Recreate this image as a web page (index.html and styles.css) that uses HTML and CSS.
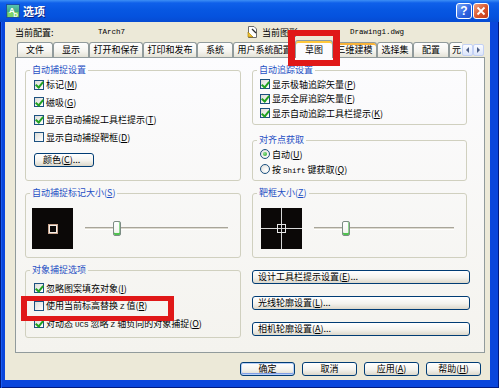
FILE: index.html
```html
<!DOCTYPE html>
<html lang="zh-CN">
<head>
<meta charset="utf-8">
<title>选项</title>
<link rel="stylesheet" href="styles.css">
</head>
<body>
<div class="window">
  <div class="titlebar">
    <svg class="app-icon" width="14" height="14" viewBox="0 0 14 14">
      <defs>
        <linearGradient id="ai" x1="0" y1="0" x2="0" y2="1">
          <stop offset="0" stop-color="#58c6b4"/>
          <stop offset="1" stop-color="#2a8f5a"/>
        </linearGradient>
      </defs>
      <rect x="0.5" y="0.5" width="13" height="13" fill="url(#ai)" stroke="#1d4fa0"/>
      <rect x="1.5" y="8" width="11" height="5" fill="#7fd36a"/>
      <text x="3" y="9" font-family="Liberation Sans, sans-serif" font-size="8" font-weight="bold" fill="#fff">A</text>
      <text x="7.5" y="13" font-family="Liberation Sans, sans-serif" font-size="6" font-weight="bold" fill="#fff">D</text>
    </svg>
    <span class="title">选项</span>
    <span class="tb-btn help">?</span>
    <span class="tb-btn close">
      <svg width="10" height="10" viewBox="0 0 10 10"><path d="M1.5 1.5 L8.5 8.5 M8.5 1.5 L1.5 8.5" stroke="#fff" stroke-width="1.8"/></svg>
    </span>
  </div>
  <div class="frame">
    <div class="client">
      <div class="profile">
        <span class="p-label p-label1">当前配置:</span>
        <span class="mono p-value1">TArch7</span>
        <svg class="doc-icon" width="11" height="12" viewBox="0 0 11 12">
          <path d="M1.5 0.5 H7 L9.5 3 V11.5 H1.5 Z" fill="#fff" stroke="#6b6b6b"/>
          <path d="M1 6 L6 11 L1 11 Z" fill="#f2c230" stroke="#a07800" stroke-width="0.6"/>
          <path d="M5 3 L9 7" stroke="#2b2b2b" stroke-width="1.2"/>
        </svg>
        <span class="p-label p-label2">当前图形:</span>
        <span class="mono">Drawing1.dwg</span>
      </div>
      <div class="tabs">
        <span class="tab">文件</span>
        <span class="tab">显示</span>
        <span class="tab">打开和保存</span>
        <span class="tab">打印和发布</span>
        <span class="tab">系统</span>
        <span class="tab">用户系统配置</span>
        <span class="tab sel">草图</span>
        <span class="tab hot">三维建模</span>
        <span class="tab">选择集</span>
        <span class="tab">配置</span>
        <span class="tab cut">元</span>
        <span class="spin"><span class="sp sp-l"></span><span class="sp sp-r"></span></span>
      </div>
      <div class="panel">
        <div class="col col-left">
          <fieldset class="group g-snap">
            <legend>自动捕捉设置</legend>
            <div class="gbody">
              <div class="row"><span class="cb on"></span><span>标记(<u>M</u>)</span></div>
              <div class="row"><span class="cb on"></span><span>磁吸(<u>G</u>)</span></div>
              <div class="row"><span class="cb on"></span><span>显示自动捕捉工具栏提示(<u>T</u>)</span></div>
              <div class="row"><span class="cb"></span><span>显示自动捕捉靶框(<u>D</u>)</span></div>
              <button class="btn btn-color">颜色(<u>C</u>)...</button>
            </div>
          </fieldset>
          <fieldset class="group g-size">
            <legend>自动捕捉标记大小(<u>S</u>)</legend>
            <div class="gbody size-body">
              <div class="preview"><span class="marker"></span></div>
              <div class="slider"><span class="track track-a"></span><span class="thumb"></span><span class="track track-b"></span></div>
            </div>
          </fieldset>
          <fieldset class="group g-osnap">
            <legend>对象捕捉选项</legend>
            <div class="gbody">
              <div class="row"><span class="cb on"></span><span>忽略图案填充对象(<u>I</u>)</span></div>
              <div class="row"><span class="cb"></span><span>使用当前标高替换 <span class="mono">Z</span> 值(<u>R</u>)</span></div>
              <div class="row"><span class="cb on"></span><span>对动态 <span class="mono">UCS</span> 忽略 <span class="mono">Z</span> 轴负向的对象捕捉(<u>O</u>)</span></div>
            </div>
          </fieldset>
        </div>
        <div class="col col-right">
          <fieldset class="group g-track">
            <legend>自动追踪设置</legend>
            <div class="gbody">
              <div class="row"><span class="cb on"></span><span>显示极轴追踪矢量(<u>P</u>)</span></div>
              <div class="row"><span class="cb on"></span><span>显示全屏追踪矢量(<u>F</u>)</span></div>
              <div class="row"><span class="cb on"></span><span>显示自动追踪工具栏提示(<u>K</u>)</span></div>
            </div>
          </fieldset>
          <fieldset class="group g-align">
            <legend>对齐点获取</legend>
            <div class="gbody">
              <div class="row"><span class="rb on"></span><span>自动(<u>U</u>)</span></div>
              <div class="row"><span class="rb"></span><span>按 <span class="mono">Shift</span> 键获取(<u>Q</u>)</span></div>
            </div>
          </fieldset>
          <fieldset class="group g-aperture">
            <legend>靶框大小(<u>Z</u>)</legend>
            <div class="gbody size-body">
              <div class="preview">
                <svg width="41" height="41" viewBox="0 0 41 41">
                  <path d="M0 20.5 H41 M20.5 0 V41" stroke="#d8d8d8" stroke-width="1"/>
                  <rect x="16.5" y="16.5" width="8" height="8" fill="none" stroke="#e8e8e8" stroke-width="1"/>
                </svg>
              </div>
              <div class="slider"><span class="track track-a"></span><span class="thumb"></span><span class="track track-b"></span></div>
            </div>
          </fieldset>
          <button class="btn btn-wide">设计工具栏提示设置(<u>E</u>)...</button>
          <button class="btn btn-wide">光线轮廓设置(<u>L</u>)...</button>
          <button class="btn btn-wide">相机轮廓设置(<u>A</u>)...</button>
        </div>
      </div>
      <div class="footer">
        <button class="btn btn-foot default">确定</button>
        <button class="btn btn-foot">取消</button>
        <button class="btn btn-foot">应用(<u>A</u>)</button>
        <button class="btn btn-foot">帮助(<u>H</u>)</button>
      </div>
    </div>
  </div>
  <div class="mark mark-tab"></div>
  <div class="mark mark-row"></div>
</div>
</body>
</html>
```
FILE: styles.css
```css
* { box-sizing: border-box; }
html, body { margin: 0; padding: 0; }
body {
  width: 499px;
  height: 388px;
  overflow: hidden;
  font-family: "Noto Sans CJK SC", "Noto Sans", sans-serif;
  font-size: 9px;
  color: #000;
  background: #0842d6;
}
.window {
  position: relative;
  width: 499px;
  height: 388px;
  display: flex;
  flex-direction: column;
  background: #0a46dc;
  box-shadow: inset 1px 0 #001a80, inset 2px 0 #1a5cf0, inset -1px 0 #001a80, inset 0 -1px #001a80;
}
.titlebar {
  height: 22px;
  flex: none;
  display: flex;
  align-items: center;
  padding: 0 10px 0 6px;
  background: linear-gradient(#3d8ff5 0, #0f60ea 3px, #0757e2 45%, #0552de 75%, #064bd2 100%);
}
.app-icon { flex: none; }
.title {
  margin-left: 3px;
  color: #fff;
  font-weight: bold;
  font-size: 11px;
  line-height: 14px;
  text-shadow: 1px 1px #0c1f7a;
  flex: 1;
}
.tb-btn {
  width: 16px;
  height: 16px;
  border: 1px solid #fff;
  border-radius: 3px;
  display: flex;
  align-items: center;
  justify-content: center;
  color: #fff;
  font-family: "Liberation Sans", sans-serif;
  font-weight: bold;
  font-size: 12px;
  line-height: 1;
}
.help { background: linear-gradient(135deg, #7aa8f8, #2d62e2 60%, #2452c8); margin-right: 1px; }
.close { background: linear-gradient(135deg, #f0a080, #d8542c 55%, #c03a18); }
.frame {
  flex: 1;
  display: flex;
  padding: 0 9px 8px 5px;
}
.client {
  flex: 1;
  background: #ece9d8;
  display: flex;
  flex-direction: column;
  padding: 0 5px 0 10px;
}
.profile {
  height: 20px;
  display: flex;
  align-items: center;
}
.p-label1 { width: 83px; }
.p-value1 { width: 149px; }
.doc-icon { flex: none; margin-right: 4px; }
.p-label2 { width: 88px; }
.mono {
  font-family: "Liberation Mono", monospace;
  font-size: 7.5px;
}
.tabs {
  height: 15px;
  display: flex;
  align-items: flex-end;
  padding-left: 2px;
}
.tab {
  height: 15px;
  min-width: 36px;
  padding: 0 3.5px;
  border: 1px solid #919b9c;
  border-bottom: none;
  border-radius: 3px 3px 0 0;
  background: linear-gradient(#fefefe, #f5f4ef 60%, #e4e2d6);
  line-height: 14px;
  text-align: center;
  white-space: nowrap;
}
.tab.hot { box-shadow: inset 0 2px #f8b33a; }
.tab.sel {
  position: relative;
  z-index: 1;
  height: 18px;
  margin: 0 -1px -1px;
  min-width: 38px;
  background: #fcfcfe;
  box-shadow: inset 0 2px #ffc83c;
  border-color: #919b9c;
  line-height: 17px;
}
.tab.cut {
  min-width: 0;
  width: 13px;
  padding: 0 0 0 2px;
  border-right: none;
  border-radius: 3px 0 0 0;
  text-align: left;
}
.spin {
  display: flex;
  align-self: flex-start;
  margin-top: 2px;
}
.sp {
  width: 11px;
  height: 12px;
  border: 1px solid #c3d1f5;
  border-radius: 2px;
  background: linear-gradient(#fbfcff, #dce5fa);
  display: flex;
  align-items: center;
  justify-content: center;
}
.sp::after {
  content: "";
  width: 0;
  height: 0;
  border-top: 3px solid transparent;
  border-bottom: 3px solid transparent;
}
.sp-l::after { border-right: 3px solid #4a5d86; }
.sp-r::after { border-left: 3px solid #4a5d86; }
.panel {
  height: 296px;
  border: 1px solid #919b9c;
  background: linear-gradient(#fcfcfe, #f4f3ee);
  display: grid;
  grid-template-columns: 216px 218px;
  column-gap: 11px;
  align-content: start;
  padding: 7px 0 0 9px;
}
.col { display: flex; flex-direction: column; align-items: flex-start; }
.group {
  margin: 0;
  padding: 0;
  min-width: 0;
  border: 1px solid #d0d0bf;
  border-radius: 3px;
}
.col-left .group { width: 216px; }
.col-right .group { width: 215px; }
legend {
  margin-left: 4px;
  padding: 0 2px;
  line-height: 10px;
  color: #1f4fc4;
}
.row {
  display: flex;
  align-items: center;
  gap: 2px;
  white-space: nowrap;
}
.cb, .rb {
  flex: none;
  width: 10px;
  height: 10px;
  border: 1px solid #1c5180;
  background: linear-gradient(135deg, #dcdcd7, #fff);
  display: flex;
  align-items: center;
  justify-content: center;
}
.cb.on::after {
  content: "";
  width: 3px;
  height: 6px;
  margin-top: -1px;
  border: solid #21a121;
  border-width: 0 2px 2px 0;
  transform: rotate(40deg);
}
.rb { border-radius: 50%; background: radial-gradient(circle at 65% 65%, #fff, #dcdcd7); }
.rb.on::after {
  content: "";
  width: 4px;
  height: 4px;
  border-radius: 50%;
  background: radial-gradient(circle at 35% 35%, #8ee08e, #21a121);
}
.btn {
  font: inherit;
  color: #000;
  padding: 0;
  margin: 0;
  height: 14px;
  border: 1px solid #003c74;
  border-radius: 3px;
  background: linear-gradient(#fff, #f4f3ee 55%, #dcd8cb);
  line-height: 12px;
}
.g-snap .gbody { padding: 1px 0 13px 8px; }
.g-snap .row { height: 17.5px; }
.btn-color {
  margin-top: 7px;
  width: 60px;
  text-align: left;
  padding-left: 8px;
}
.g-size, .g-osnap { margin-top: 7px; }
.size-body {
  display: flex;
  align-items: center;
  padding: 10px 12px 8px 6px;
}
.g-aperture .size-body { padding-left: 8px; }
.preview {
  flex: none;
  width: 41px;
  height: 41px;
  background: #0b0807;
  display: flex;
  align-items: center;
  justify-content: center;
}
.preview svg { display: block; }
.marker {
  width: 10px;
  height: 10px;
  border: 1px solid #c9a58f;
  box-shadow: inset 0 0 0 1px #f6efe8;
}
.slider {
  flex: 1;
  margin-left: 12px;
  display: flex;
  align-items: center;
}
.track {
  height: 3px;
  border-top: 1px solid #a8a59a;
  border-bottom: 1px solid #fff;
  background: #dedbd0;
}
.track-a { width: 28px; }
.track-b { flex: 1; }
.thumb {
  flex: none;
  width: 8px;
  height: 15px;
  border: 1px solid #7c8c84;
  border-radius: 2px;
  background: linear-gradient(#fff, #f0f2ec);
  box-shadow: inset 0 -2px #4fc24f, inset -1px 0 #8fd88f;
}
.g-osnap .gbody { padding: 4.5px 0 5px 8px; }
.g-osnap .row { height: 17.5px; }
.g-track .gbody { padding: 2px 0 3.5px 7px; }
.g-track .row { height: 14.5px; }
.g-align { margin-top: 10px; }
.g-align .gbody { padding: 1.5px 0 3.5px 7px; }
.g-align .row { height: 15px; }
.g-aperture { margin-top: 7px; }
.btn-wide {
  width: 218px;
  margin-top: 12px;
  text-align: left;
  padding-left: 5px;
}
.footer {
  display: flex;
  justify-content: flex-end;
  gap: 7px;
  padding: 9px 4px 0 0;
}
.btn-foot {
  width: 55px;
  text-align: center;
}
.btn-foot.default {
  box-shadow: inset 0 0 0 1px #b8d0f8, inset 0 -1px 0 1px #7f9ee6;
}
.mark {
  position: absolute;
  border: solid #e01818;
}
.mark-tab {
  left: 288px;
  top: 30px;
  width: 52px;
  height: 36px;
  border-width: 6px 7px;
}
.mark-row {
  left: 21px;
  top: 296px;
  width: 153px;
  height: 25px;
  border-width: 5px 6px;
}
```
